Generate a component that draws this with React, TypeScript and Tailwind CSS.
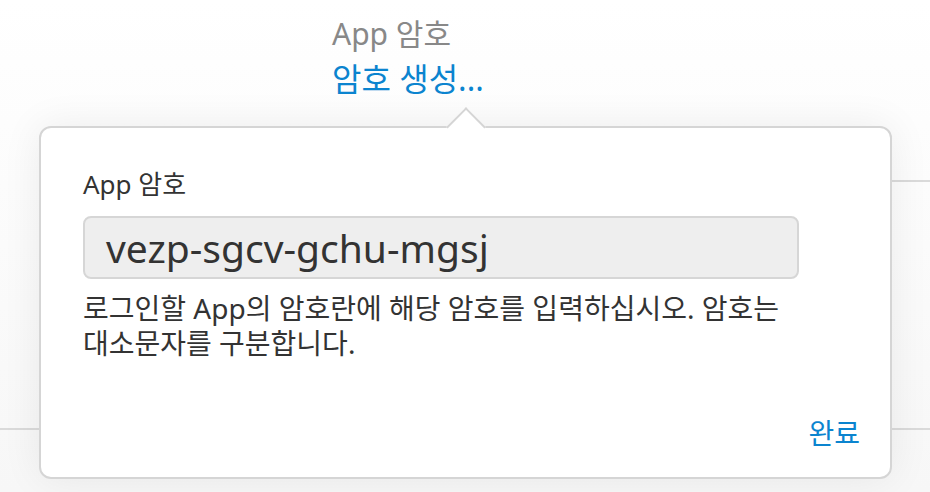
import React from "react";

const font = { fontFamily: '"Noto Sans", "Noto Sans CJK KR", sans-serif' };

export default function App() {
  return (
    <div
      className="relative w-[930px] h-[492px] overflow-hidden bg-gradient-to-b from-white to-[#f7f7f7]"
      style={font}
    >
      {/* header */}
      <div className="flex flex-col pl-[332px] pt-[12px]">
        <div className="text-[30px] leading-[44px] text-[#888888]">App 암호</div>
        <div className="text-[32px] leading-[46px] text-[#0b84cf]">암호 생성...</div>
      </div>

      {/* background rows */}
      <div className="ml-[333px] mt-[78px] border-t-2 border-[#dadada] h-[248px]" />
      <div className="border-t-2 border-[#dadada]" />

      {/* popover */}
      <div className="absolute left-[39px] top-[126px] w-[853px] h-[353px] rounded-[12px] border-2 border-[#d5d5d5] bg-white shadow-[0_0_40px_rgba(0,0,0,0.07)]">
        <div className="absolute left-[411px] top-[-15px] h-[28px] w-[28px] rotate-45 border-l-2 border-t-2 border-[#d5d5d5] bg-white" />
        <div className="relative flex h-full flex-col pl-[42px] pr-[30px] pt-[40px] pb-[29px]">
          <div className="text-[26px] leading-[32px] text-[#333333]">App 암호</div>
          <div className="mt-[16px] flex h-[63px] w-[716px] items-center rounded-[8px] border-2 border-[#d6d6d6] bg-[#eeeeee] pl-[21px]">
            <span className="text-[39px] leading-[50px] text-[#333333]">vezp-sgcv-gchu-mgsj</span>
          </div>
          <div className="mt-[12px] text-[28px] leading-[35px] text-[#333333]">
            로그인할 App의 암호란에 해당 암호를 입력하십시오. 암호는
            <br />
            대소문자를 구분합니다.
          </div>
          <div className="mt-auto flex justify-end">
            <span className="text-[28px] leading-[30px] text-[#0b84cf]">완료</span>
          </div>
        </div>
      </div>
    </div>
  );
}
